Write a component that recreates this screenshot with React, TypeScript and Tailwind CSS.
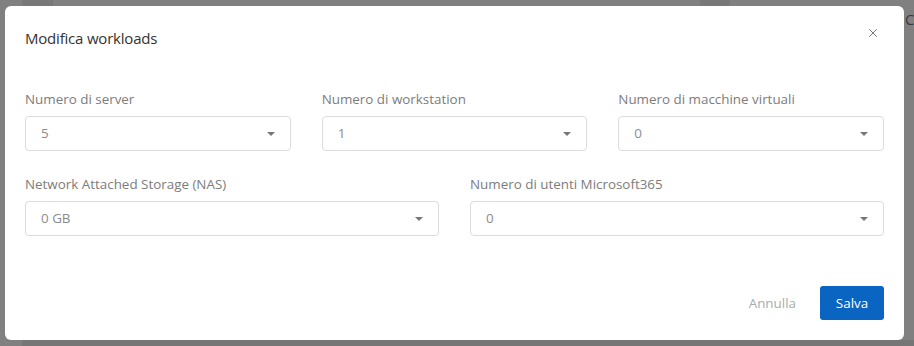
import { X } from "lucide-react";

const font = { fontFamily: "'Open Sans', 'Noto Sans', sans-serif" };

interface SelectFieldProps {
  label: string;
  value: string;
}

function SelectField({ label, value }: SelectFieldProps) {
  return (
    <div className="flex flex-col">
      <label className="h-[20px] text-[13.4px] leading-[20px] text-[#7c7c7c] mb-[7px]">{label}</label>
      <div className="h-[35px] rounded-[4px] border border-[#dcdcdc] bg-white flex items-center justify-between pl-[15px] pr-[15px]">
        <span className="text-[13.4px] text-[#8c8c8c]">{value}</span>
        <span className="w-0 h-0 border-l-[4px] border-r-[4px] border-t-[4px] border-l-transparent border-r-transparent border-t-[#777]" />
      </div>
    </div>
  );
}

export default function App() {
  return (
    <div className="relative w-[914px] h-[346px] overflow-hidden bg-[#808080]" style={font}>
      {/* dimmed page behind the modal */}
      <div className="absolute left-[22px] top-0 w-[31px] h-[6px] bg-[#787878]" />
      <div className="absolute left-[700px] top-0 w-[30px] h-[6px] bg-[#787878]" />
      <div className="absolute left-[22px] top-[340px] w-[892px] h-[6px] bg-[#767676]" />
      <div className="absolute left-[905px] top-[8px] text-[15px] text-[#3a3a3a]">C</div>

      <div className="absolute left-[5px] top-[6px] w-[899px] h-[334px] bg-white rounded-[6px] px-[20px] pt-[20px]">
        <div className="flex items-center justify-between h-[24px]">
          <h2 className="text-[15px] font-medium text-[#333] tracking-[-0.2px]">Modifica workloads</h2>
          <button className="text-[#666] -mt-[10px] mr-[4px]">
            <X size={14} strokeWidth={1.5} />
          </button>
        </div>

        <div className="mt-[39px] grid grid-cols-3 gap-x-[31px]">
          <SelectField label="Numero di server" value="5" />
          <SelectField label="Numero di workstation" value="1" />
          <SelectField label="Numero di macchine virtuali" value="0" />
        </div>

        <div className="mt-[23px] grid grid-cols-2 gap-x-[31px]">
          <SelectField label="Network Attached Storage (NAS)" value="0 GB" />
          <SelectField label="Numero di utenti Microsoft365" value="0" />
        </div>

        <div className="mt-[50px] flex items-center justify-end gap-[24px]">
          <button className="text-[13.4px] text-[#ababab]">Annulla</button>
          <button className="h-[34px] w-[64px] rounded-[3px] bg-[#0a64c2] text-white text-[13.4px]">Salva</button>
        </div>
      </div>
    </div>
  );
}
